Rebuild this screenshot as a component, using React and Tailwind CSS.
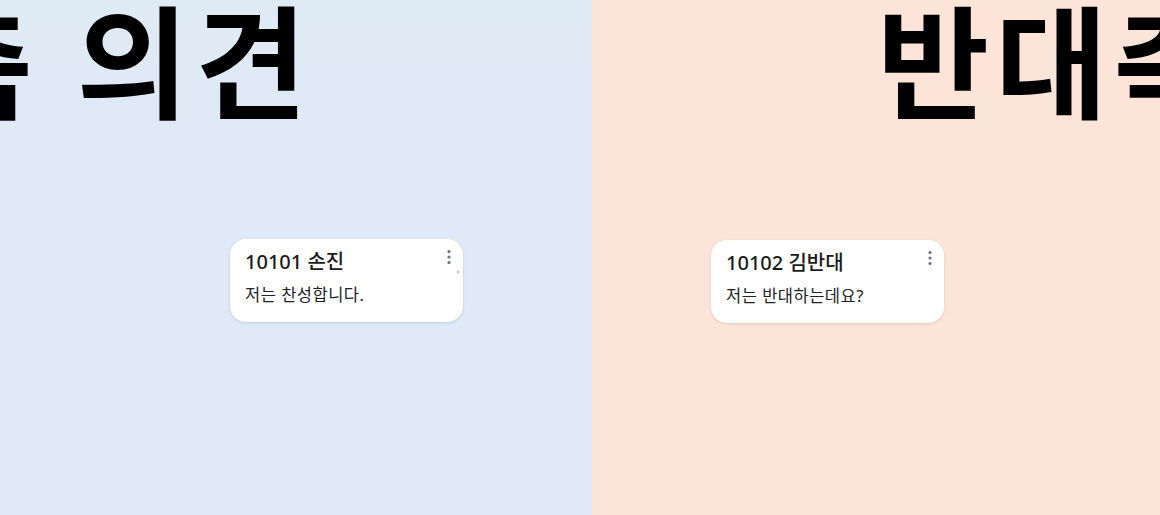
import React from "react";

function Kebab() {
  return (
    <svg width="4" height="16" viewBox="0 0 4 16" className="text-gray-500">
      <circle cx="2" cy="2.5" r="1.6" fill="currentColor" />
      <circle cx="2" cy="8" r="1.6" fill="currentColor" />
      <circle cx="2" cy="13.5" r="1.6" fill="currentColor" />
    </svg>
  );
}

function OpinionCard({ title, body, dot = false, className = "" }) {
  return (
    <div className={`relative w-[233px] h-[83px] rounded-2xl bg-white shadow-[0_1px_3px_rgba(0,0,0,0.12)] pl-[15px] pt-[9px] ${className}`}>
      <div className="text-[20px] font-medium leading-[28px] text-[#1a1a1a]">{title}</div>
      <div className="mt-[8px] text-[16.5px] leading-[22px] tracking-[0.5px] text-[#222]">{body}</div>
      <div className="absolute right-[12px] top-[10px]">
        <Kebab />
      </div>
      {dot && <div className="absolute right-[4px] top-[32px] h-[2px] w-[2px] rounded-full bg-gray-400" />}
    </div>
  );
}

export default function App() {
  return (
    <div
      className="flex h-[515px] w-[1160px] overflow-hidden"
      style={{ fontFamily: '"Noto Sans", "Noto Sans CJK KR", sans-serif' }}
    >
      {/* 찬성 */}
      <div className="w-[592px] shrink-0 overflow-hidden bg-[#e0e9f8]">
        <div className="h-[140px] bg-gradient-to-b from-[#dfebf4] to-[#e0e9f7] overflow-hidden">
          <div className="ml-[-316px] whitespace-nowrap text-[122px] font-bold leading-[124px] tracking-[6px] text-black">
            찬성측 의견
          </div>
        </div>
        <OpinionCard className="ml-[230px] mt-[99px]" title="10101 손진" body="저는 찬성합니다." dot />
      </div>

      {/* 반대 */}
      <div className="flex-1 overflow-hidden bg-[#fde4d8]">
        <div className="h-[140px] overflow-hidden">
          <div className="ml-[285px] whitespace-nowrap text-[122px] font-bold leading-[124px] tracking-[6px] text-black">
            반대측 의견
          </div>
        </div>
        <OpinionCard className="ml-[119px] mt-[100px]" title="10102 김반대" body="저는 반대하는데요?" />
      </div>
    </div>
  );
}
